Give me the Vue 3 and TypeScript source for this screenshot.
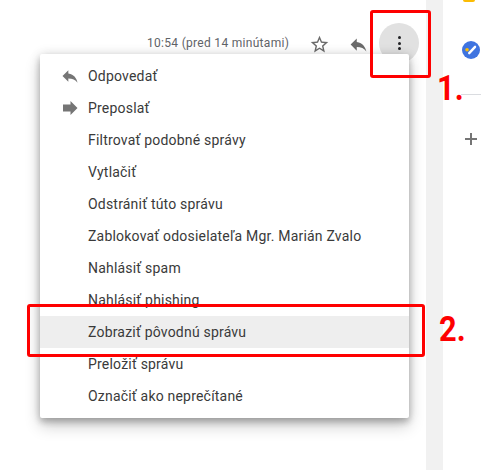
<script setup lang="ts">
const items: { label: string; icon?: string; active?: boolean }[] = [
  { label: 'Odpovedať', icon: 'reply' },
  { label: 'Preposlať', icon: 'forward' },
  { label: 'Filtrovať podobné správy' },
  { label: 'Vytlačiť' },
  { label: 'Odstrániť túto správu' },
  { label: 'Zablokovať odosielateľa Mgr. Marián Zvalo' },
  { label: 'Nahlásiť spam' },
  { label: 'Nahlásiť phishing' },
  { label: 'Zobraziť pôvodnú správu', active: true },
  { label: 'Preložiť správu' },
  { label: 'Označiť ako neprečítané' },
]
</script>

<template>
  <div class="page">
    <main class="mail">
      <div class="head">
        <span class="time">10:54 (pred 14 minútami)</span>
        <svg class="star" width="21" height="21" viewBox="0 0 24 24">
          <path fill="#6b6b6b" d="M22 9.24l-7.19-.62L12 2 9.19 8.63 2 9.24l5.46 4.73L5.82 21 12 17.27 18.18 21l-1.63-7.03L22 9.24zM12 15.4l-3.76 2.27 1-4.28-3.32-2.88 4.38-.38L12 6.1l1.71 4.04 4.38.38-3.32 2.88 1 4.28L12 15.4z"/>
        </svg>
        <svg class="reply" width="21" height="21" viewBox="0 0 24 24">
          <path fill="#6b6b6b" d="M10 9V5l-7 7 7 7v-4.1c5 0 8.5 1.6 11 5.1-1-5-4-10-11-11z"/>
        </svg>
        <div class="more">
          <i></i><i></i><i></i>
        </div>
      </div>

      <ul class="menu">
        <li v-for="item in items" :key="item.label" class="row" :class="{ active: item.active }">
          <span class="slot">
            <svg v-if="item.icon === 'reply'" width="20" height="20" viewBox="0 0 24 24">
              <path fill="#757575" d="M10 9V5l-7 7 7 7v-4.1c5 0 8.5 1.6 11 5.1-1-5-4-10-11-11z"/>
            </svg>
            <svg v-else-if="item.icon === 'forward'" width="20" height="20" viewBox="0 0 20 20">
              <path fill="#757575" d="M3 6.5h7.5V3l7 7-7 7v-3.5H3z"/>
            </svg>
          </span>
          <span>{{ item.label }}</span>
        </li>
      </ul>
    </main>

    <div class="gutter"></div>

    <aside class="side">
      <div class="keep"></div>
      <svg class="tasks" width="18" height="18" viewBox="0 0 20 20">
        <circle cx="10" cy="10" r="10" fill="#3f74e0"/>
        <circle cx="5.6" cy="9.8" r="2" fill="#fbbc04"/>
        <path d="M8 13.5 14.5 6.5" stroke="#fff" stroke-width="2.6" stroke-linecap="round"/>
      </svg>
      <div class="rule"></div>
      <svg class="plus" width="12" height="12" viewBox="0 0 12 12">
        <path fill="#757575" d="M5 0h2v5h5v2H7v5H5V7H0V5h5z"/>
      </svg>
    </aside>

    <div class="mark mark-one"></div>
    <div class="mark mark-two"></div>
    <span class="num num-one">1.</span>
    <span class="num num-two">2.</span>
  </div>
</template>

<style>
html, body { margin: 0; background: #fff; overflow: hidden; }
</style>

<style scoped>
.page {
  position: relative;
  display: flex;
  width: 498px;
  height: 470px;
  overflow: hidden;
  background: #fff;
  font-family: Roboto, "Liberation Sans", sans-serif;
}
.mail { position: relative; width: 426px; flex: none; }
.head {
  display: flex;
  align-items: center;
  height: 40px;
  margin-top: 23px;
  padding-left: 147px;
}
.time {
  width: 142px;
  font-size: 12px;
  letter-spacing: .3px;
  color: #5f6368;
  white-space: nowrap;
}
.star { margin-left: 20px; margin-top: 2px; }
.reply { margin-left: 18px; margin-top: 2px; }
.more {
  display: flex;
  flex-direction: column;
  align-items: center;
  justify-content: center;
  gap: 2.5px;
  width: 40px;
  height: 40px;
  margin-left: 10px;
  border-radius: 50%;
  background: #e1e1e1;
}
.more i {
  width: 3px;
  height: 3px;
  border-radius: 50%;
  background: #202124;
}
.menu {
  position: absolute;
  top: 54px;
  left: 40px;
  width: 369px;
  margin: 0;
  padding: 6px 0;
  list-style: none;
  background: #fff;
  border-radius: 2px;
  box-shadow: 0 4px 6px rgba(0,0,0,.2), 0 8px 16px rgba(0,0,0,.2), 0 0 12px rgba(0,0,0,.12);
}
.row {
  display: flex;
  align-items: center;
  height: 32px;
  font-size: 14px;
  letter-spacing: .2px;
  color: #3a3a3a;
  white-space: nowrap;
}
.row.active { background: #eee; }
.slot {
  display: flex;
  justify-content: center;
  width: 20px;
  margin-left: 20px;
  margin-right: 8px;
}
.gutter { width: 17px; flex: none; background: #f1f1f1; }
.side {
  position: relative;
  flex: 1;
  display: flex;
  flex-direction: column;
  padding-left: 19px;
}
.keep {
  width: 12px;
  height: 2px;
  border-radius: 0 0 2px 2px;
  background: #fbbc04;
  margin-left: 1px;
}
.tasks { margin-top: 39px; }
.rule { width: 20px; height: 1px; margin-top: 35px; margin-left: -1px; background: #dadce0; }
.plus { margin-top: 38px; margin-left: 3px; }
.mark {
  position: absolute;
  box-sizing: border-box;
  border: 3px solid #fe0000;
  border-radius: 3px;
}
.mark-one { left: 370px; top: 10px; width: 61px; height: 68px; }
.mark-two { left: 27px; top: 304px; width: 398px; height: 53px; }
.num {
  position: absolute;
  font-size: 35px;
  font-weight: 700;
  line-height: 35px;
  color: #fe0000;
  transform: scaleX(.88);
  transform-origin: left center;
}
.num-one { left: 437px; top: 71px; }
.num-two { left: 439px; top: 312px; }
</style>
